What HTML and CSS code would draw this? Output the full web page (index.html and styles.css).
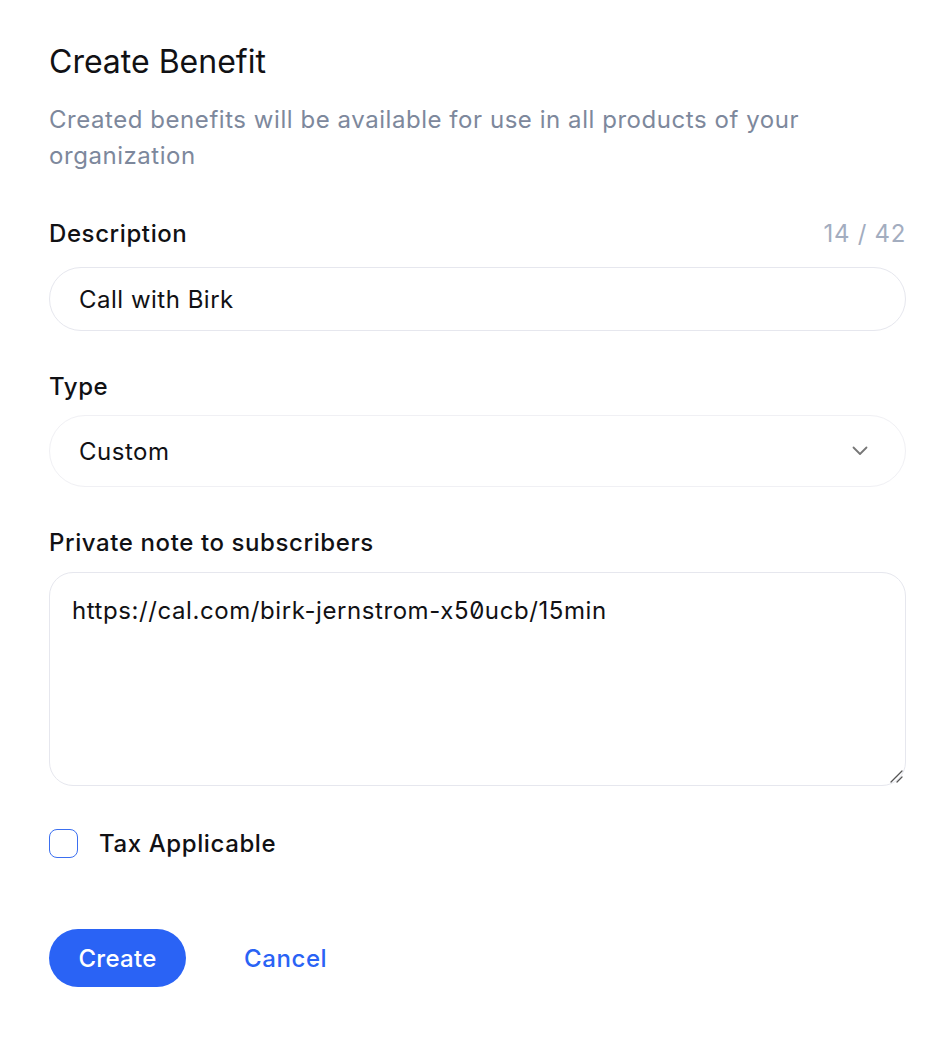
FILE: index.html
```html
<!DOCTYPE html>
<html lang="en">
<head>
<meta charset="utf-8">
<title>Create Benefit</title>
<link rel="stylesheet" href="styles.css">
</head>
<body>
<div class="page">
  <h1 class="title">Create Benefit</h1>
  <p class="subtitle">Created benefits will be available for use in all products of your organization</p>

  <div class="field field-desc">
    <div class="label-row">
      <label class="label">Description</label>
      <span class="counter">14 / 42</span>
    </div>
    <div class="input">Call with Birk</div>
  </div>

  <div class="field field-type">
    <label class="label">Type</label>
    <div class="select">
      <span>Custom</span>
      <svg class="chev" width="20" height="20" viewBox="0 0 20 20" fill="none"><path d="M3.5 6.5 10 13l6.5-6.5" stroke="#777" stroke-width="1.8" stroke-linecap="round" stroke-linejoin="round"/></svg>
    </div>
  </div>

  <div class="field field-note">
    <label class="label">Private note to subscribers</label>
    <div class="textarea">
      <span class="note-text">https://cal.com/birk-jernstrom-x50ucb/15min</span>
      <svg class="grip" width="14" height="14" viewBox="0 0 14 14"><path d="M2 13 13 2M8 13l5-5" stroke="#555" stroke-width="1.3" stroke-linecap="round"/></svg>
    </div>
  </div>

  <div class="check-row">
    <span class="checkbox"></span>
    <span class="check-label">Tax Applicable</span>
  </div>

  <div class="actions">
    <button class="btn-primary">Create</button>
    <button class="btn-link">Cancel</button>
  </div>
</div>
</body>
</html>
```

FILE: styles.css
```css
* { box-sizing: border-box; }
html, body { margin: 0; padding: 0; background: #fff; }
body {
  font-family: Inter, "Noto Sans", sans-serif;
  color: #111;
}
.page {
  padding: 44px 46px 0 49px;
  width: 952px;
}
.title {
  margin: 0;
  font-size: 32px;
  line-height: 36px;
  font-weight: 400;
  color: #111114;
}
.subtitle {
  margin: 22px 0 0;
  font-size: 24px;
  line-height: 36px;
  letter-spacing: 0.55px;
  color: #7d889c;
  width: 820px;
}
.field { display: flex; flex-direction: column; }
.field-desc { margin-top: 44px; }
.field-type { margin-top: 40px; }
.field-note { margin-top: 40px; }
.label-row { display: flex; justify-content: space-between; align-items: center; }
.label {
  font-size: 24px;
  line-height: 32px;
  letter-spacing: 0.6px;
  font-weight: 500;
  color: #111114;
}
.counter {
  font-size: 24px;
  line-height: 32px;
  letter-spacing: 0.7px;
  color: #a3adbf;
}
.input {
  margin-top: 17px;
  height: 64px;
  border: 1px solid #e6e7ee;
  border-radius: 32px;
  padding: 0 29px;
  display: flex;
  align-items: center;
  font-size: 24px;
  letter-spacing: 0.5px;
  color: #111114;
}
.select {
  margin-top: 12px;
  height: 72px;
  border: 1px solid #f0f0f4;
  border-radius: 36px;
  padding: 0 35px 0 29px;
  display: flex;
  align-items: center;
  justify-content: space-between;
  font-size: 24px;
  letter-spacing: 0.5px;
  color: #111114;
}
.chev { display: block; }
.textarea {
  margin-top: 13px;
  height: 214px;
  border: 1px solid #e6e7ee;
  border-radius: 24px;
  padding: 21px 22px;
  position: relative;
  font-size: 24px;
  line-height: 34px;
  letter-spacing: 0.58px;
  color: #111114;
}
.note-text { font-feature-settings: "zero" 1; }
.grip {
  position: absolute;
  right: 2px;
  bottom: 2px;
}
.check-row {
  margin-top: 43px;
  display: flex;
  align-items: center;
  gap: 21px;
}
.checkbox {
  width: 29px;
  height: 29px;
  border: 1.5px solid #3b6ff0;
  border-radius: 8px;
  display: block;
}
.check-label {
  font-size: 24px;
  font-weight: 500;
  letter-spacing: 0.6px;
  color: #111114;
}
.actions {
  margin-top: 71px;
  display: flex;
  align-items: center;
  gap: 58px;
}
.btn-primary {
  height: 58px;
  width: 137px;
  border: none;
  border-radius: 29px;
  background: #2a63f5;
  color: #fff;
  font-family: inherit;
  font-size: 24px;
  font-weight: 500;
  letter-spacing: 0.3px;
  padding: 0;
}
.btn-link {
  border: none;
  background: none;
  padding: 0;
  font-family: inherit;
  font-size: 24px;
  font-weight: 500;
  letter-spacing: 0.6px;
  color: #2a63f5;
}
```
